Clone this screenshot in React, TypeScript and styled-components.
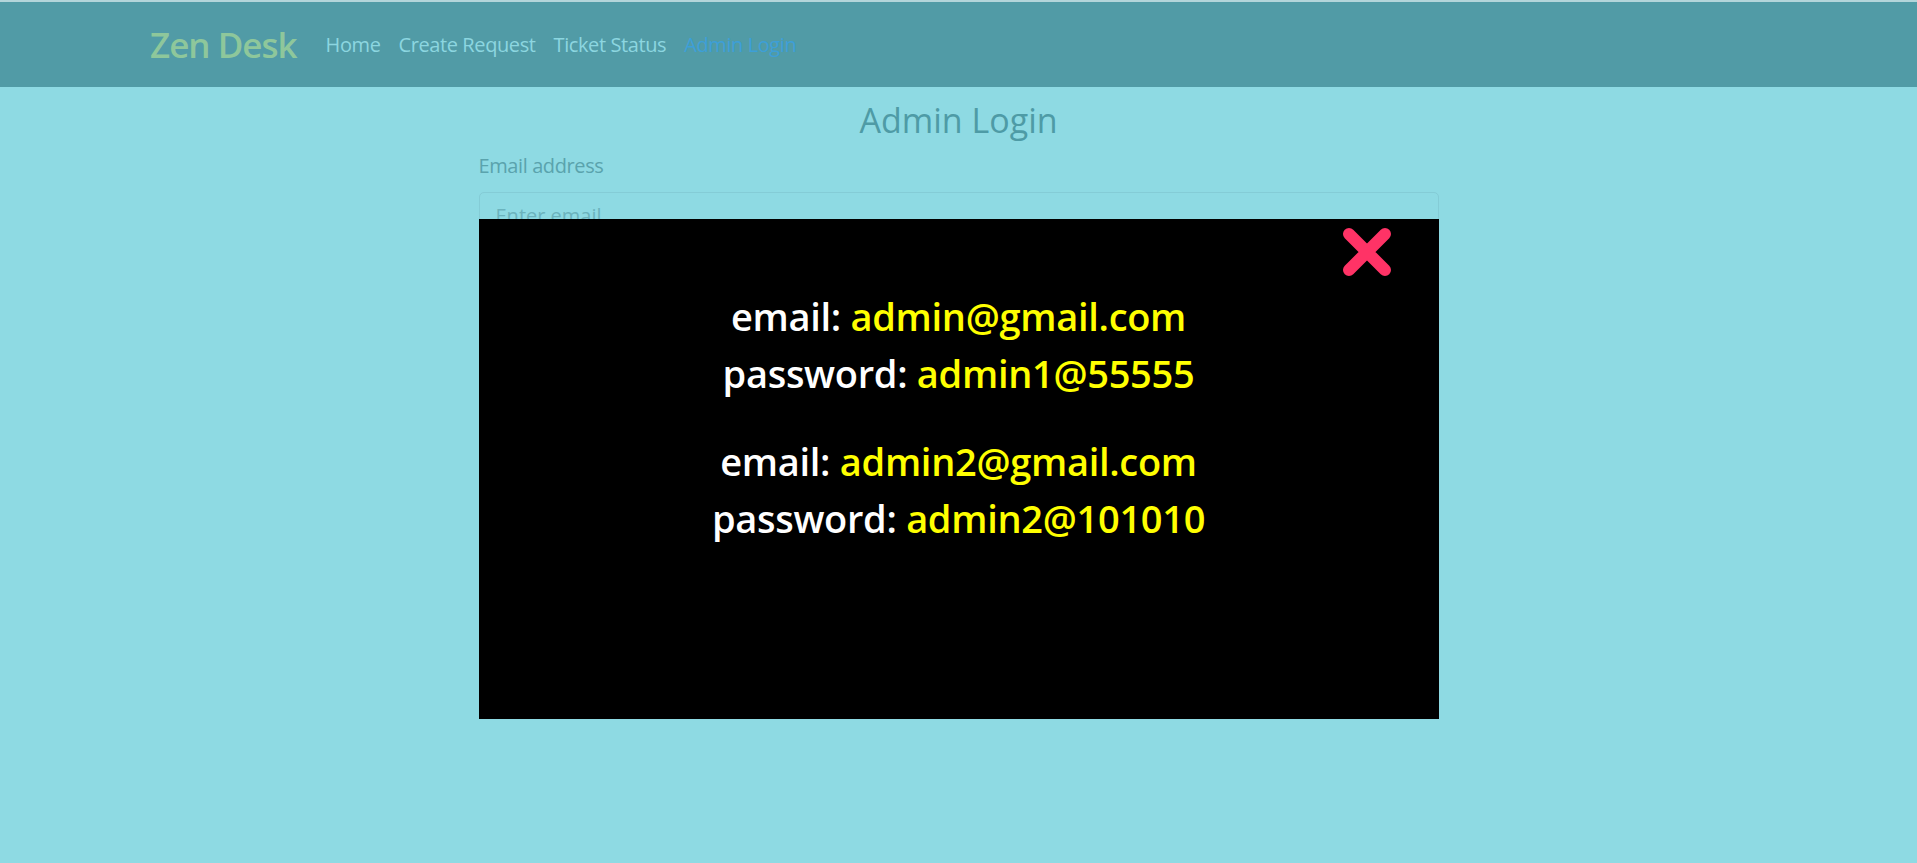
import React from 'react';
import styled, { createGlobalStyle } from 'styled-components';

const GlobalStyle = createGlobalStyle`
  html, body {
    margin: 0;
    padding: 0;
    background: #8edae3;
  }
  body {
    font-family: "Open Sans", "Noto Sans", sans-serif;
    border-top: 2px solid #b3d5da;
    min-height: 861px;
  }
`;

const Navbar = styled.nav`
  background: #519ba6;
  height: 85px;
  display: flex;
  align-items: center;
`;

const NavInner = styled.div`
  width: 100%;
  max-width: 1617px;
  margin: 0 auto;
  display: flex;
  align-items: center;
`;

const Brand = styled.a`
  font-size: 35px;
  font-weight: 600;
  color: #8ec79b;
  text-decoration: none;
  margin-right: 20px;
  line-height: 1;
  letter-spacing: -1px;
`;

const NavList = styled.ul`
  display: flex;
  list-style: none;
  margin: 0;
  padding: 0;
`;

const NavLink = styled.a<{ $active?: boolean }>`
  display: block;
  padding: 0 9px;
  font-size: 20px;
  line-height: 30px;
  letter-spacing: -0.4px;
  color: ${p => (p.$active ? '#3d9fd8' : '#8cd6e0')};
  text-decoration: none;
`;

const Main = styled.main`
  position: relative;
  width: 960px;
  margin: 0 auto;
  padding-top: 13px;
`;

const Title = styled.h3`
  text-align: center;
  font-size: 34px;
  font-weight: 500;
  line-height: 1.2;
  margin: 0 0 10px;
  color: #4e9ba6;
`;

const Label = styled.label`
  display: block;
  font-size: 20px;
  line-height: 1.5;
  color: #5aa3ad;
  margin-bottom: 11px;
  letter-spacing: -0.4px;
`;

const Input = styled.input`
  display: block;
  width: 100%;
  box-sizing: border-box;
  height: 47px;
  border: 1px solid #84ccd6;
  border-radius: 5px;
  background: transparent;
  padding: 0 16px;
  font-size: 20px;
  font-family: inherit;
  &::placeholder {
    color: #6bb3bd;
  }
`;

const Modal = styled.div`
  position: absolute;
  top: 132px;
  left: 0;
  right: 0;
  height: 500px;
  box-sizing: border-box;
  background: #000;
  display: flex;
  flex-direction: column;
  align-items: center;
  padding-top: 73px;
`;

const CloseButton = styled.button`
  position: absolute;
  top: 8px;
  right: 47px;
  width: 50px;
  height: 50px;
  padding: 0;
  border: none;
  background: none;
  cursor: pointer;
  svg {
    display: block;
  }
`;

const Group = styled.div`
  text-align: center;
  & + & {
    margin-top: 32px;
  }
`;

const Line = styled.p`
  margin: 0 0 8.6px;
  font-size: 38px;
  font-weight: 600;
  line-height: 48px;
  color: #fff;
  letter-spacing: -0.3px;
`;

const Value = styled.span`
  color: #ffff00;
`;

const accounts = [
  { email: 'admin@gmail.com', password: 'admin1@55555' },
  { email: 'admin2@gmail.com', password: 'admin2@101010' },
];

const links = ['Home', 'Create Request', 'Ticket Status', 'Admin Login'];

export default function App() {
  return (
    <>
      <GlobalStyle />
      <Navbar>
        <NavInner>
          <Brand href="#">Zen Desk</Brand>
          <NavList>
            {links.map(l => (
              <li key={l}>
                <NavLink href="#" $active={l === 'Admin Login'}>{l}</NavLink>
              </li>
            ))}
          </NavList>
        </NavInner>
      </Navbar>
      <Main>
        <Title>Admin Login</Title>
        <Label htmlFor="email">Email address</Label>
        <Input id="email" type="email" placeholder="Enter email" />
        <Modal>
          <CloseButton aria-label="close">
            <svg width="50" height="50" viewBox="0 0 50 50">
              <path
                d="M7 7 L43 43 M43 7 L7 43"
                stroke="#ff3366"
                strokeWidth="12"
                strokeLinecap="round"
                fill="none"
              />
            </svg>
          </CloseButton>
          {accounts.map(a => (
            <Group key={a.email}>
              <Line>email: <Value>{a.email}</Value></Line>
              <Line>password: <Value>{a.password}</Value></Line>
            </Group>
          ))}
        </Modal>
      </Main>
    </>
  );
}
